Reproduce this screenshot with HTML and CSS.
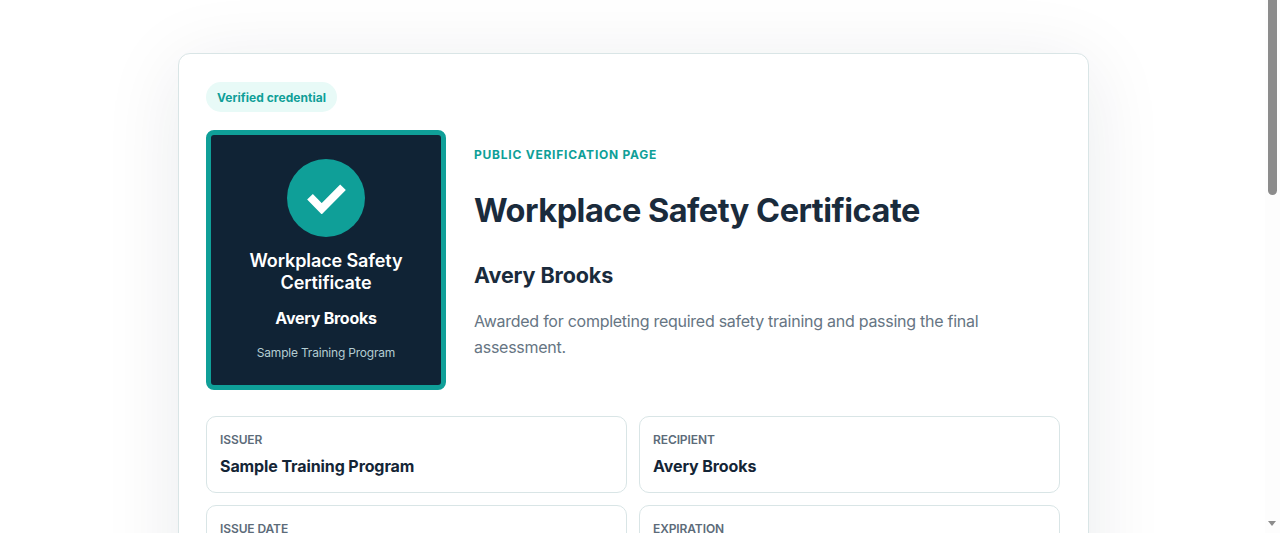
FILE: index.html
```html
<!DOCTYPE html>
<html lang="en">
<head>
<meta charset="utf-8">
<title>Workplace Safety Certificate</title>
<link rel="stylesheet" href="styles.css">
</head>
<body>
<main class="page">
  <section class="card">
    <span class="badge">Verified credential</span>
    <div class="hero">
      <div class="cert">
        <div class="seal">
          <svg width="40" height="32" viewBox="0 0 40 32"><path d="M4 14.8 L15.7 26.7 L37 5.2" fill="none" stroke="#fff" stroke-width="8"/></svg>
        </div>
        <div class="cert-title">Workplace Safety Certificate</div>
        <div class="cert-name">Avery Brooks</div>
        <div class="cert-issuer">Sample Training Program</div>
      </div>
      <div class="intro">
        <p class="eyebrow">PUBLIC VERIFICATION PAGE</p>
        <h1>Workplace Safety Certificate</h1>
        <h2>Avery Brooks</h2>
        <p class="desc">Awarded for completing required safety training and passing the final assessment.</p>
      </div>
    </div>
    <div class="facts">
      <div class="fact"><div class="label">ISSUER</div><div class="value">Sample Training Program</div></div>
      <div class="fact"><div class="label">RECIPIENT</div><div class="value">Avery Brooks</div></div>
      <div class="fact"><div class="label">ISSUE DATE</div><div class="value">January 15, 2025</div></div>
      <div class="fact"><div class="label">EXPIRATION</div><div class="value">January 15, 2027</div></div>
      <div class="fact"><div class="label">CREDENTIAL ID</div><div class="value">WSC-2025-0142</div></div>
      <div class="fact"><div class="label">STATUS</div><div class="value">Active</div></div>
    </div>
    <div class="about">
      <h3>About this credential</h3>
      <p class="desc">This page confirms that the credential above was issued to the named recipient by the listed training program.</p>
    </div>
    <div class="about">
      <h3>Skills covered</h3>
      <p class="desc">Hazard identification, incident reporting, emergency response and safe use of equipment.</p>
    </div>
    <div class="about">
      <h3>Verification</h3>
      <p class="desc">Contact the issuer with the credential ID to confirm these details.</p>
    </div>
  </section>
</main>
<div class="scrollbar" aria-hidden="true">
  <div class="scroll-thumb"></div>
  <div class="scroll-arrow"></div>
</div>
</body>
</html>
```
FILE: styles.css
```css
* { box-sizing: border-box; }
html, body { margin: 0; padding: 0; background: #fff; }
body { font-family: "Inter", "Noto Sans", sans-serif; color: #1a2b3c; }
.page { margin-right: 14px; padding: 53px 16px 53px; }
.card {
  width: 911px;
  margin: 0 auto;
  background: #fff;
  border: 1px solid #d9e5e6;
  border-radius: 12px;
  padding: 28px 27.5px;
  box-shadow: 0 12px 80px rgba(16, 36, 52, 0.09);
}
.badge {
  display: inline-block;
  height: 30px;
  line-height: 31px;
  padding: 0 11px;
  border-radius: 15px;
  background: #e8faf7;
  color: #0f9f98;
  font-size: 12px;
  font-weight: 700;
  letter-spacing: 0.05px;
}
.hero { display: flex; gap: 28px; align-items: flex-start; margin-top: 18px; }
.cert {
  flex: none;
  width: 240px;
  height: 260px;
  background: #102335;
  border: 5px solid #0f9f98;
  border-radius: 8px;
  color: #fff;
  text-align: center;
  padding: 24px 14px 0;
}
.seal {
  width: 78px;
  height: 78px;
  margin: 0 auto 13px;
  border-radius: 50%;
  background: #0f9f98;
  display: flex;
  align-items: center;
  justify-content: center;
}
.cert-title { font-size: 18px; line-height: 22px; font-weight: 600; letter-spacing: -0.1px; }
.cert-name { font-size: 16px; line-height: 20px; font-weight: 700; margin-top: 14px; letter-spacing: -0.25px; }
.cert-issuer { font-size: 12px; line-height: 16px; margin-top: 17px; color: #b4cdd2; letter-spacing: -0.2px; }
.intro { flex: 1; min-width: 0; padding-top: 17px; }
.eyebrow { margin: 0; font-size: 12px; line-height: 16px; font-weight: 700; letter-spacing: 0.76px; color: #0f9f98; }
h1 { margin: 28px 0 0; font-size: 32.5px; line-height: 40px; font-weight: 700; letter-spacing: -0.5px; color: #1a2b3c; }
h2 { margin: 30px 0 0; font-size: 21.5px; line-height: 28px; font-weight: 700; letter-spacing: -0.1px; color: #1a2b3c; }
.desc { margin: 19px 0 0; font-size: 16px; line-height: 26px; color: #667583; letter-spacing: -0.26px; }
.facts { display: grid; grid-template-columns: 1fr 1fr; gap: 12px; margin-top: 26px; }
.fact { height: 77px; border: 1px solid #d9e5e6; border-radius: 10px; padding: 15px 13px; }
.label { font-size: 12px; line-height: 16px; font-weight: 600; color: #5c6b79; letter-spacing: -0.1px; }
.value { font-size: 16px; line-height: 22px; font-weight: 700; margin-top: 7px; color: #142536; letter-spacing: -0.1px; }
.about { margin-top: 28px; }
.about h3 { margin: 0; font-size: 18px; line-height: 24px; font-weight: 700; }
.about .desc { margin-top: 10px; }
.scrollbar {
  position: fixed;
  top: 0;
  right: 0;
  bottom: 0;
  width: 15px;
  background: #fdfdfd;
}
.scroll-thumb {
  position: absolute;
  top: 0;
  left: 3px;
  width: 9px;
  height: 195px;
  background: #8c8c8c;
  border-radius: 0 0 5px 5px;
}
.scroll-arrow {
  position: absolute;
  left: 3px;
  top: 521px;
  width: 0;
  height: 0;
  border-left: 4.5px solid transparent;
  border-right: 4.5px solid transparent;
  border-top: 5px solid #8c8c8c;
}
```
